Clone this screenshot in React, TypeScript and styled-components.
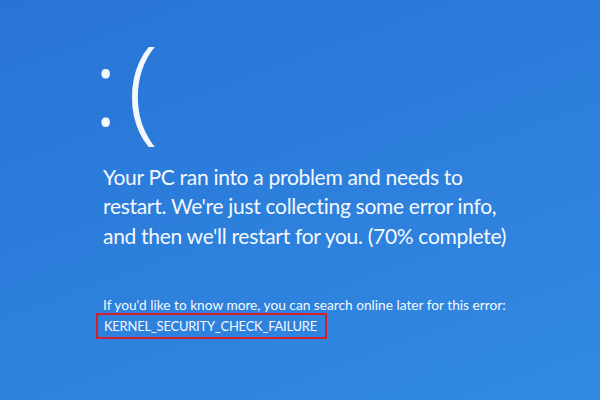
import React from "react";
import styled, { createGlobalStyle } from "styled-components";

const GlobalStyle = createGlobalStyle`
  html, body {
    margin: 0;
    padding: 0;
    width: 600px;
    height: 400px;
    overflow: hidden;
  }
`;

const ERROR_CODE = "KERNEL_SECURITY_CHECK_FAILURE";

const App = () => {
  return (
    <>
      <GlobalStyle />
      <Screen>
        <Frown>
          <Colon>:</Colon>
          <Paren>(</Paren>
        </Frown>
        <Message>
          Your PC ran into a problem and needs to
          <br />
          restart. We're just collecting some error info,
          <br />
          and then we'll restart for you. (70% complete)
        </Message>
        <Hint>If you'd like to know more, you can search online later for this error:</Hint>
        <StopCode>{ERROR_CODE}</StopCode>
      </Screen>
    </>
  );
};

export default App;

const Screen = styled.div`
  width: 600px;
  height: 400px;
  box-sizing: border-box;
  padding: 10px 0 0 100px;
  display: flex;
  flex-direction: column;
  align-items: flex-start;
  background: linear-gradient(160deg, #2874d6 0%, #2d7fdc 50%, #318ae1 100%);
  color: #f4f8fd;
  font-family: Lato, "Open Sans", sans-serif;
`;

const Frown = styled.div`
  display: flex;
  align-items: center;
  margin-left: -7px;
  font-family: "Open Sans", sans-serif;
  font-weight: 300;
`;

const Colon = styled.span`
  font-size: 106px;
  line-height: 106px;
`;

const Paren = styled.span`
  margin-left: 9px;
  font-size: 115px;
  line-height: 1.3;
`;

const Message = styled.p`
  margin: 2px 0 0 3px;
  font-size: 21px;
  line-height: 29.5px;
  letter-spacing: -0.3px;
`;

const Hint = styled.p`
  margin: 45px 0 0 3px;
  font-size: 13.7px;
  line-height: 20px;
`;

const StopCode = styled.div`
  margin: -2px 0 0 -4px;
  padding: 0.5px 8px 1.5px 6px;
  border: 2.5px solid #d4202c;
  font-size: 13px;
  line-height: 20px;
  letter-spacing: -0.25px;
`;
